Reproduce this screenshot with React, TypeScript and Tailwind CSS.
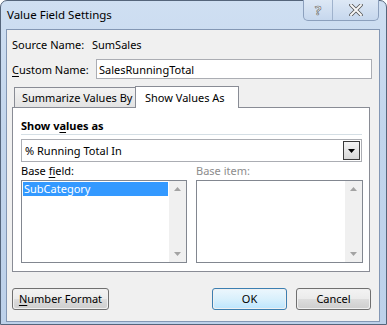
import React from 'react';

const font = "font-['Segoe_UI','Noto_Sans',sans-serif]";

const U = ({ children }: { children: React.ReactNode }) => <span className="underline underline-offset-2">{children}</span>;

const ScrollBar = () => (
    <div className="w-[17px] h-full bg-[#f0f0f0] flex flex-col justify-between items-center py-[6px]">
        <svg width="7" height="4" viewBox="0 0 7 4"><path d="M0 4 L3.5 0 L7 4 Z" fill="#a3a3a3" /></svg>
        <svg width="7" height="4" viewBox="0 0 7 4"><path d="M0 0 L3.5 4 L7 0 Z" fill="#a3a3a3" /></svg>
    </div>
);

const Button = ({ children, width, isDefault }: { children: React.ReactNode; width: string; isDefault?: boolean }) => (
    <div className={`${width} h-[22px] rounded-[3px] border ${isDefault ? 'border-[#3c7fb1]' : 'border-[#707070]'} p-px`}>
        <div className={`h-full rounded-[2px] flex items-center justify-center text-black ${isDefault ? 'bg-gradient-to-b from-[#eaf6fd] via-[#d9f0fc] to-[#bee6fd]' : 'bg-[linear-gradient(#f2f2f2_0%,#ebebeb_50%,#dddddd_51%,#cfcfcf_100%)]'}`}>
            {children}
        </div>
    </div>
);

const App = () => {
    return (
        <div className={`w-[387px] h-[325px] bg-white whitespace-nowrap ${font}`}>
            <div className="w-full h-full rounded-t-[7px] border border-[#55657b] bg-[linear-gradient(180deg,#cfdff2_0%,#c2d5ec_40%,#bdd1ea_100%)] flex flex-col">
                {/* Title bar */}
                <div className="h-[28px] flex items-start">
                    <div className="pl-[6px] pt-[5px] text-[11.5px] text-black leading-[17px]">Value Field Settings</div>
                    <div className="ml-auto mr-[7px] -mt-px flex h-[21px] rounded-b-[5px] border border-t-0 border-[#8ca0bd] bg-gradient-to-b from-[#dde8f5] to-[#c6d7ed] overflow-hidden">
                        <div className="w-[29px] flex items-center justify-center border-r border-[#9fb2cc]">
                            <span className="text-[13px] font-bold text-[#f4f4f4] leading-none [-webkit-text-stroke:0.6px_#606060]">?</span>
                        </div>
                        <div className="w-[45px] flex items-center justify-center">
                            <svg width="14" height="12" viewBox="0 0 14 12">
                                <path d="M2 1 L12 11 M12 1 L2 11" stroke="#555" strokeWidth="3.6" strokeLinecap="round" fill="none" />
                                <path d="M2 1 L12 11 M12 1 L2 11" stroke="#f7f7f7" strokeWidth="2" strokeLinecap="round" fill="none" />
                            </svg>
                        </div>
                    </div>
                </div>

                {/* Client area */}
                <div className="ml-[5px] mr-[6px] mb-[2px] flex-1 border border-[#8397b4] bg-[#f0f0f0] flex flex-col pl-[5px] text-[11px] text-black">
                    <div className="mt-[7px] h-[15px] leading-[15px] flex">
                        <span className="w-[80px]">Source Name:</span>
                        <span>SumSales</span>
                    </div>

                    <div className="mt-[7px] flex items-center">
                        <span className="w-[84px] leading-[15px]"><U>C</U>ustom Name:</span>
                        <div className="w-[276px] h-[20px] border border-[#abadb3] bg-white flex items-center pl-[2px] leading-[15px]">SalesRunningTotal</div>
                    </div>

                    {/* Tabs */}
                    <div className="mt-[7px] h-[21px] flex items-end relative z-10">
                        <div className="ml-[2px] w-[122px] h-[20px] border border-b-0 border-[#898c95] bg-gradient-to-b from-[#f3f3f3] to-[#e3e3e3] flex items-center pl-[7px] leading-[15px]">Summarize Values By</div>
                        <div className="-ml-px w-[104px] h-[22px] -mb-px border border-b-0 border-[#898c95] bg-white flex items-center pl-[9px] leading-[15px]">Show Values As</div>
                    </div>

                    {/* Panel */}
                    <div className="w-[358px] h-[165px] border border-[#898c95] bg-white flex flex-col pl-[8px]">
                        <div className="mt-[10px] h-[15px] leading-[15px] font-bold">Show v<U>a</U>lues as</div>
                        <div className="mt-[1px] w-[341px] h-px bg-[#d5dfe5]" />
                        <div className="mt-[4px] w-[341px] h-[23px] border border-[#abadb3] bg-white flex items-center pl-[3px] pr-px leading-[15px]">
                            <span>% Running Total In</span>
                            <div className="ml-auto w-[17px] h-[19px] border border-[#3a3a3a] bg-gradient-to-b from-[#f4f4f4] to-[#d7d7d7] flex items-center justify-center">
                                <svg width="7" height="4" viewBox="0 0 7 4"><path d="M0 0 L3.5 4 L7 0 Z" fill="#000" /></svg>
                            </div>
                        </div>
                        <div className="mt-[1px] h-[15px] leading-[15px] flex">
                            <span className="w-[175px]">Base <U>f</U>ield:</span>
                            <span className="text-[#8d8d8d]">Base item:</span>
                        </div>
                        <div className="mt-[2px] h-[83px] flex gap-[9px]">
                            <div className="w-[166px] h-full border border-[#828790] bg-white flex">
                                <div className="flex-1 p-px">
                                    <div className="h-[14px] bg-[#3399ff] text-white leading-[14px] pl-px">SubCategory</div>
                                </div>
                                <ScrollBar />
                            </div>
                            <div className="w-[167px] h-full border border-[#828790] bg-white flex">
                                <div className="flex-1" />
                                <ScrollBar />
                            </div>
                        </div>
                    </div>

                    {/* Buttons */}
                    <div className="mt-[16px] flex">
                        <Button width="w-[97px]"><span><U>N</U>umber Format</span></Button>
                        <div className="ml-[103px]"><Button width="w-[75px]" isDefault>OK</Button></div>
                        <div className="ml-[9px]"><Button width="w-[75px]">Cancel</Button></div>
                    </div>
                </div>
            </div>
        </div>
    );
};

export default App;
